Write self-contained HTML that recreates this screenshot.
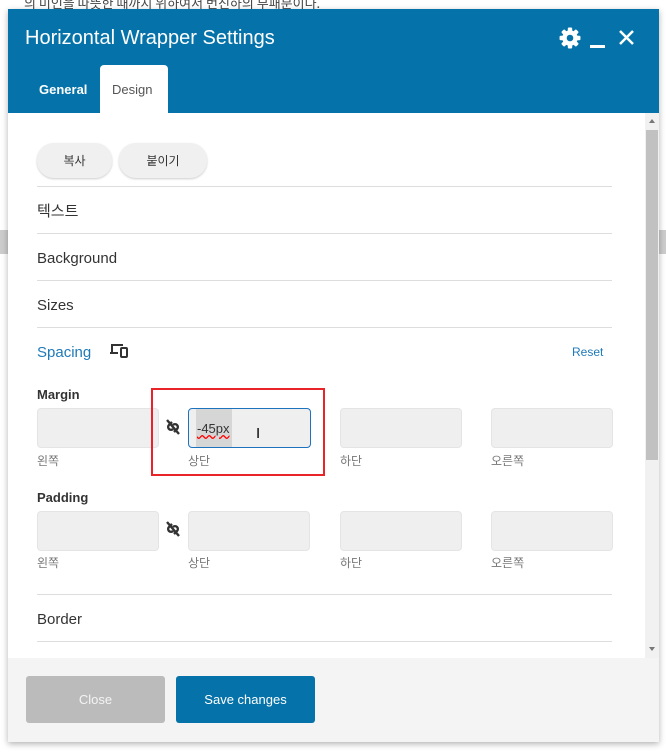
<!DOCTYPE html>
<html><head><meta charset="utf-8"><style>
body{margin:0;width:666px;height:753px;position:relative;overflow:hidden;background:#fff;font-family:"Liberation Sans","Noto Sans CJK KR",sans-serif;}
.a{position:absolute}
.modal{left:8px;top:9px;width:651px;height:733px;background:#fff;box-shadow:0 2px 6px rgba(0,0,0,.3)}
.hdr{left:0;top:0;width:651px;height:104px;background:#0573a9}
.t{color:#333;font-size:15px}
.line{height:1px;background:#ddd;left:29px;width:575px}
.inp{background:#efefef;border:1px solid #e4e4e4;border-radius:4px;height:38px;width:120px}
.lbl{color:#777;font-size:12px}
.ko{font-family:"Noto Sans CJK KR","Liberation Sans",sans-serif}
</style></head><body>
<div class="a ko" style="left:24px;top:-7px;font-size:13px;color:#444">의 미인을 따뜻한 때까지 위하여서 번진하의 부패분이다.</div>
<div class="a" style="left:0;top:230px;width:8px;height:24px;background:#ccc"></div>
<div class="a" style="left:659px;top:230px;width:7px;height:24px;background:#ccc"></div>
<div class="a modal">
 <div class="a hdr">
  <div class="a" style="left:17px;top:18px;color:#fff;font-size:20px">Horizontal Wrapper Settings</div>
  <svg class="a" style="left:551px;top:18px" width="22" height="22" viewBox="0 0 20 20"><g fill="#fff"><circle cx="10" cy="10" r="7"/><rect x="8" y="0.5" width="4" height="19" rx="1"/><rect x="8" y="0.5" width="4" height="19" rx="1" transform="rotate(45 10 10)"/><rect x="8" y="0.5" width="4" height="19" rx="1" transform="rotate(90 10 10)"/><rect x="8" y="0.5" width="4" height="19" rx="1" transform="rotate(135 10 10)"/></g><circle cx="10" cy="10" r="3" fill="#0573a9"/></svg>
  <div class="a" style="left:582px;top:36px;width:15px;height:3px;background:#fff"></div>
  <svg class="a" style="left:610px;top:20px" width="17" height="17"><path d="M2 2L15 15M15 2L2 15" stroke="#fff" stroke-width="2.5"/></svg>
  <div class="a" style="left:31px;top:73px;color:#fff;font-size:13px;font-weight:bold">General</div>
  <div class="a" style="left:92px;top:56px;width:68px;height:48px;background:#fff;border-radius:4px 4px 0 0"></div>
  <div class="a" style="left:104px;top:73px;color:#555;font-size:13px">Design</div>
 </div>
 <div class="a" style="left:637px;top:104px;width:14px;height:545px;background:#f1f1f1"></div>
 <div class="a" style="left:638px;top:121px;width:12px;height:330px;background:#c1c1c1"></div>
 <div class="a" style="left:641px;top:110px;border:3px solid transparent;border-bottom:4px solid #777;border-top:0"></div>
 <div class="a" style="left:641px;top:638px;border:3px solid transparent;border-top:4px solid #777;border-bottom:0"></div>
 <div class="a ko" style="left:29px;top:134px;width:75px;height:35px;border-radius:17px;background:#f0f0f0;box-shadow:0 1px 2px rgba(0,0,0,.2);text-align:center;line-height:35px;font-size:12px;color:#333">복사</div>
 <div class="a ko" style="left:111px;top:134px;width:88px;height:35px;border-radius:17px;background:#f0f0f0;box-shadow:0 1px 2px rgba(0,0,0,.2);text-align:center;line-height:35px;font-size:12px;color:#333">붙이기</div>
 <div class="a line" style="top:177px"></div>
 <div class="a t ko" style="left:29px;top:191px">텍스트</div>
 <div class="a line" style="top:224px"></div>
 <div class="a t" style="left:29px;top:241px">Background</div>
 <div class="a line" style="top:271px"></div>
 <div class="a t" style="left:29px;top:288px">Sizes</div>
 <div class="a line" style="top:318px"></div>
 <div class="a t" style="left:29px;top:335px;color:#1e7ab8">Spacing</div>
 <svg class="a" style="left:102px;top:334px" width="20" height="16"><path d="M1 2h12M2 2v8M0 10h8" stroke="#333" stroke-width="2" fill="none"/><rect x="11" y="5" width="6" height="9" rx="1" stroke="#333" stroke-width="2" fill="none"/></svg>
 <div class="a" style="left:564px;top:336px;font-size:12px;color:#1e7ab8">Reset</div>
 <div class="a" style="left:29px;top:378px;font-size:13px;color:#333;font-weight:bold">Margin</div>
 <div class="a inp" style="left:29px;top:399px"></div>
 <svg class="a" style="left:157px;top:409px" width="16" height="18"><path d="M7 4L4 7a2.5 2.5 0 0 0 4 4M9 14l3-3a2.5 2.5 0 0 0-4-4M2 2l12 14" stroke="#333" stroke-width="2.4" fill="none"/></svg>
 <div class="a inp" style="left:180px;top:399px;border:1px solid #1e73be;width:121px"></div>
 <div class="a" style="left:188px;top:400px;width:36px;height:38px;background:#d6d6d6"></div>
 <div class="a" style="left:189px;top:412px;font-size:13px;color:#333;text-decoration:underline wavy red">-45px</div>
 <div class="a" style="left:248px;top:416px;font-size:15px;color:#000">I</div>
 <div class="a inp" style="left:332px;top:399px"></div>
 <div class="a inp" style="left:483px;top:399px"></div>
 <div class="a lbl ko" style="left:29px;top:443px">왼쪽</div>
 <div class="a lbl ko" style="left:180px;top:443px">상단</div>
 <div class="a lbl ko" style="left:332px;top:443px">하단</div>
 <div class="a lbl ko" style="left:483px;top:443px">오른쪽</div>
 <div class="a" style="left:143px;top:379px;width:170px;height:84px;border:2px solid #e8242a"></div>
 <div class="a" style="left:29px;top:481px;font-size:13px;color:#333;font-weight:bold">Padding</div>
 <div class="a inp" style="left:29px;top:502px"></div>
 <svg class="a" style="left:157px;top:511px" width="16" height="18"><path d="M7 4L4 7a2.5 2.5 0 0 0 4 4M9 14l3-3a2.5 2.5 0 0 0-4-4M2 2l12 14" stroke="#333" stroke-width="2.4" fill="none"/></svg>
 <div class="a inp" style="left:180px;top:502px"></div>
 <div class="a inp" style="left:332px;top:502px"></div>
 <div class="a inp" style="left:483px;top:502px"></div>
 <div class="a lbl ko" style="left:29px;top:545px">왼쪽</div>
 <div class="a lbl ko" style="left:180px;top:545px">상단</div>
 <div class="a lbl ko" style="left:332px;top:545px">하단</div>
 <div class="a lbl ko" style="left:483px;top:545px">오른쪽</div>
 <div class="a line" style="top:585px"></div>
 <div class="a t" style="left:29px;top:602px">Border</div>
 <div class="a line" style="top:632px"></div>
 <div class="a" style="left:0;top:649px;width:651px;height:84px;background:#f4f4f4"></div>
 <div class="a" style="left:18px;top:667px;width:139px;height:47px;background:#bbb;border-radius:3px;color:#f4f4f4;font-size:13px;text-align:center;line-height:48px">Close</div>
 <div class="a" style="left:168px;top:667px;width:139px;height:47px;background:#0573a9;border-radius:3px;color:#fff;font-size:13px;text-align:center;line-height:48px">Save changes</div>
</div>
</body></html>
